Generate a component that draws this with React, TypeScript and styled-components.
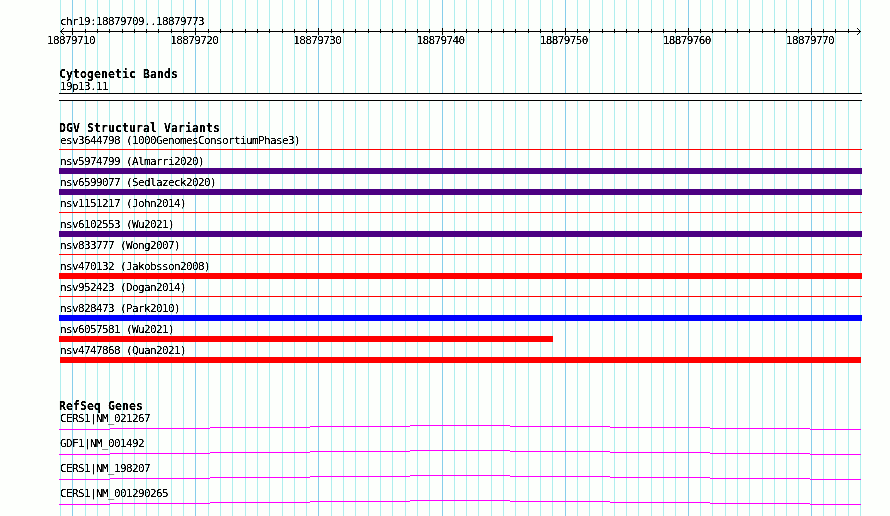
import React from "react";
import styled, { createGlobalStyle } from "styled-components";

const GlobalStyle = createGlobalStyle`
  html, body { margin: 0; padding: 0; background: #fdfffc; }
`;

const START = 18879709;
const BASES = 65;
const WIDTH = 890;
const HEIGHT = 516;

const positions = Array.from({ length: BASES + 1 }, (_, i) => ({
  x: Math.round(60 + (i * 800) / BASES),
  base: START + i,
  major: (START + i) % 10 === 0,
}));
const majors = positions.filter((p) => p.major);

const Browser = styled.main`
  position: relative;
  width: ${WIDTH}px;
  height: ${HEIGHT}px;
  overflow: hidden;
  background: #fdfffc;
  color: #000000;
`;

const GridLines = styled.svg`
  position: absolute;
  inset: 0;
  display: block;
`;

const Tracks = styled.div`
  position: relative;
  display: flex;
  flex-direction: column;
`;

const Label = styled.div`
  height: 13px;
  padding-left: 60px;
  font: 11px/13px "DejaVu Sans Mono", monospace;
  letter-spacing: -0.622px;
  white-space: pre;
  filter: url(#bitmap-text);
`;

const Heading = styled.h2`
  height: 12px;
  margin: 0;
  padding-left: 59px;
  font: bold 11.5px/13px "DejaVu Sans Mono", monospace;
  letter-spacing: 0.077px;
  white-space: pre;
  filter: url(#bitmap-text);
`;

const Ruler = styled.header`
  height: 68px;
  padding-top: 15px;
  box-sizing: border-box;
`;

const Axis = styled.svg`
  display: block;
  height: 7px;
`;

const Scale = styled.div`
  display: flex;
  justify-content: space-between;
  width: 787px;
  margin: -1px 0 0 47px;
`;

const ScaleLabel = styled(Label)`
  width: 48px;
  padding-left: 0;
`;

const Section = styled.section<{ $height: number }>`
  height: ${(p) => p.$height}px;
`;

const Band = styled.div`
  width: 803px;
  height: 8px;
  margin-left: 59px;
  box-sizing: border-box;
  border: solid #000000;
  border-width: 1px 0;
  background: #ffffff;
`;

const Variant = styled.div`
  height: 21px;
`;

const Bar = styled.div<{ $color: string; $thin?: boolean; $from?: number; $to?: number }>`
  width: ${(p) => (p.$to ?? 862) - (p.$from ?? 59)}px;
  height: ${(p) => (p.$thin ? 1 : 6)}px;
  margin: ${(p) => (p.$thin ? 2 : 0)}px 0 0 ${(p) => p.$from ?? 59}px;
  background: ${(p) => p.$color};
`;

const Gene = styled.div`
  height: 25px;
`;

const Intron = styled.svg`
  display: block;
  height: 5px;
`;

const PURPLE = "#4b0082";
const RED = "#ff0000";
const BLUE = "#0000ff";

const variants: { name: string; color: string; thin?: boolean; from?: number; to?: number }[] = [
  { name: "esv3644798 (1000GenomesConsortiumPhase3)", color: RED, thin: true },
  { name: "nsv5974799 (Almarri2020)", color: PURPLE },
  { name: "nsv6599077 (Sedlazeck2020)", color: PURPLE },
  { name: "nsv1151217 (John2014)", color: RED, thin: true },
  { name: "nsv6102553 (Wu2021)", color: PURPLE },
  { name: "nsv833777 (Wong2007)", color: RED, thin: true },
  { name: "nsv470132 (Jakobsson2008)", color: RED },
  { name: "nsv952423 (Dogan2014)", color: RED, thin: true },
  { name: "nsv828473 (Park2010)", color: BLUE },
  { name: "nsv6057581 (Wu2021)", color: RED, to: 553 },
  { name: "nsv4747868 (Quan2021)", color: RED, from: 60, to: 861 },
];

const genes = ["CERS1|NM_021267", "GDF1|NM_001492", "CERS1|NM_198207", "CERS1|NM_001290265"];

const intronSteps = [
  [59, 110, 4],
  [110, 210, 3],
  [210, 310, 2],
  [310, 410, 1],
  [410, 510, 0],
  [510, 610, 1],
  [610, 710, 2],
  [710, 810, 3],
  [810, 861, 4],
];

export default function App() {
  return (
    <Browser>
      <GlobalStyle />
      <GridLines width={WIDTH} height={HEIGHT} shapeRendering="crispEdges">
        <defs>
          {/* Hard-edged glyphs, like a bitmap font */}
          <filter id="bitmap-text" x="0" y="-0.2" width="1" height="1.4">
            <feComponentTransfer>
              <feFuncA type="linear" slope={2.6} intercept={-0.6} />
            </feComponentTransfer>
          </filter>
        </defs>
        {positions.map((p) => (
          <rect key={p.base} x={p.x} y={0} width={1} height={HEIGHT} fill={p.major ? "#87ceeb" : "#afeeee"} />
        ))}
      </GridLines>
      <Tracks>
        <Ruler>
          <Label>chr19:18879709..18879773</Label>
          <Axis width={WIDTH} height={7} shapeRendering="crispEdges">
            <rect x={60} y={3} width={801} height={1} />
            {positions.slice(1, -1).map((p) => (
              <rect key={p.base} x={p.x} y={p.major ? 0 : 1} width={1} height={p.major ? 7 : 4} />
            ))}
            {[1, 2, 3].map((d) => (
              <g key={d}>
                <rect x={60 + d} y={3 - d} width={1} height={1} />
                <rect x={60 + d} y={3 + d} width={1} height={1} />
                <rect x={860 - d} y={3 - d} width={1} height={1} />
                <rect x={860 - d} y={3 + d} width={1} height={1} />
              </g>
            ))}
          </Axis>
          <Scale>
            {majors.map((p) => (
              <ScaleLabel key={p.base}>{p.base}</ScaleLabel>
            ))}
          </Scale>
        </Ruler>
        <Section $height={54}>
          <Heading>Cytogenetic Bands</Heading>
          <Label>19p13.11</Label>
          <Band />
        </Section>
        <Section $height={278}>
          <Heading>DGV Structural Variants</Heading>
          {variants.map((v) => (
            <Variant key={v.name}>
              <Label>{v.name}</Label>
              <Bar $color={v.color} $thin={v.thin} $from={v.from} $to={v.to} />
            </Variant>
          ))}
        </Section>
        <Section $height={116}>
          <Heading>RefSeq Genes</Heading>
          {genes.map((g) => (
            <Gene key={g}>
              <Label>{g}</Label>
              <Intron width={WIDTH} height={5} shapeRendering="crispEdges">
                {intronSteps.map(([from, to, y]) => (
                  <rect key={from} x={from} y={y} width={to - from} height={1} fill="#ff00ff" />
                ))}
              </Intron>
            </Gene>
          ))}
        </Section>
      </Tracks>
    </Browser>
  );
}
